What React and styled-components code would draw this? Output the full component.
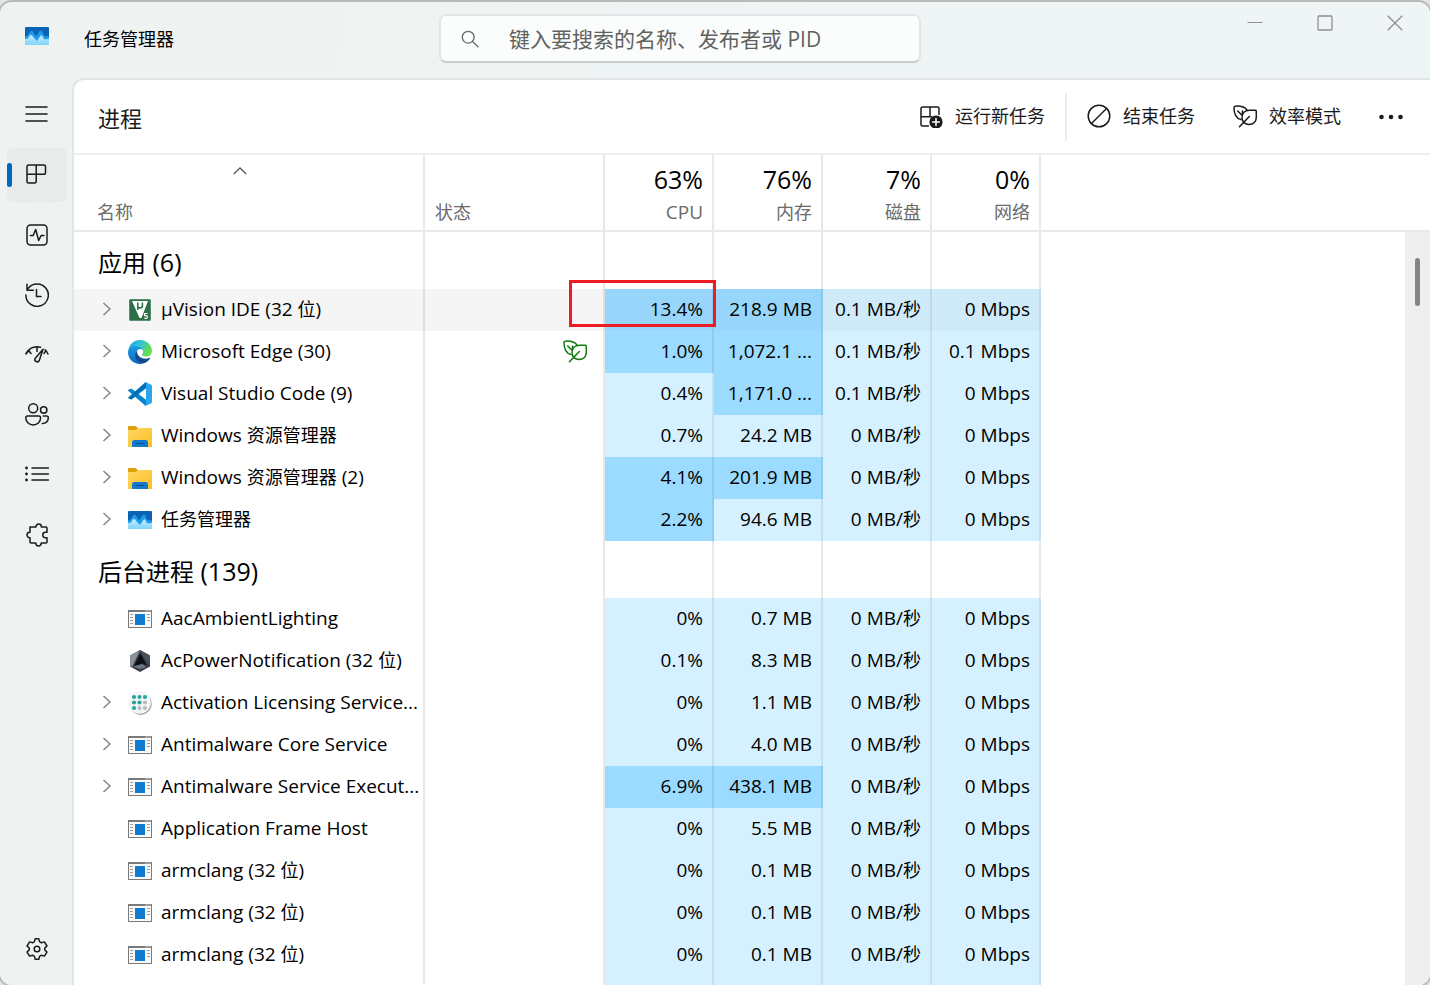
import React from 'react';
import styled, { createGlobalStyle, css } from 'styled-components';

const GlobalStyle = createGlobalStyle`
  *, *::before, *::after { box-sizing: border-box; }
  html, body { margin: 0; padding: 0; background: #e4e4e4; }
  body, button, input {
    font-family: "Open Sans", "Noto Sans CJK SC", sans-serif;
    font-size: 18px;
    line-height: 24px;
    color: #000;
  }
`;

const LINE = 'rgba(0, 0, 0, 0.09)';

/* ---------- layout ---------- */

const Window = styled.div`
  height: calc(100vh - 2px);
  margin-top: 2px;
  display: flex;
  flex-direction: column;
  overflow: hidden;
  border-radius: 12px;
  box-shadow: 0 0 0 2px #b8b9b9;
  background: linear-gradient(100deg, #eef3f1 0%, #eff4f5 60%);
`;

const TitleBar = styled.header`
  flex: none;
  height: 76px;
  display: grid;
  grid-template-columns: minmax(0, 439fr) minmax(0, 482fr) minmax(0, 509fr);
`;

const AppTitle = styled.div`
  display: flex;
  align-items: center;
  gap: 35px;
  padding: 0 0 2px 25px;
  svg { margin-bottom: 6px; }
`;

const TitleText = styled.h1`
  margin: 0;
  font-size: 18px;
  font-weight: 400;
`;

const SearchBox = styled.label`
  align-self: start;
  margin-top: 12px;
  height: 49px;
  display: flex;
  align-items: center;
  gap: 30px;
  padding: 0 20px;
  border: 2px solid #e2e6e6;
  border-bottom-color: #cbcecd;
  border-radius: 7px;
  background: #fbfdfc;
`;

const SearchInput = styled.input`
  flex: 1;
  min-width: 0;
  padding: 0;
  border: 0;
  outline: 0;
  background: transparent;
  font-size: 21px;
  line-height: 28px;
  &::placeholder { color: #5f6261; opacity: 1; }
`;

const WindowControls = styled.div`
  display: flex;
  justify-content: flex-end;
  align-items: flex-start;
`;

const ControlButton = styled.button`
  width: 70px;
  height: 42px;
  padding: 0;
  display: grid;
  place-items: center;
  border: 0;
  background: transparent;
`;

const Body = styled.div`
  flex: 1;
  min-height: 0;
  display: flex;
`;

const Sidebar = styled.nav`
  flex: none;
  width: 72px;
  padding: 10px 5px 9px 7px;
  display: flex;
  flex-direction: column;
  gap: 6px;
`;

const NavButton = styled.button`
  position: relative;
  width: 60px;
  height: 54px;
  padding: 0;
  display: grid;
  place-items: center;
  border: 0;
  border-radius: 6px;
  background: ${(p) => (p.$active ? '#e7ebea' : 'transparent')};
  ${(p) => p.$active && css`
    &::before {
      content: '';
      position: absolute;
      left: 0;
      top: 15px;
      width: 5px;
      height: 24px;
      border-radius: 3px;
      background: #0067c0;
    }
  `}
  ${(p) => p.$last && css`margin-top: auto;`}
`;

const Panel = styled.main`
  flex: 1;
  min-width: 0;
  display: flex;
  flex-direction: column;
  overflow: hidden;
  border-top: 2px solid #e2e5e5;
  border-left: 2px solid #e2e5e5;
  border-top-left-radius: 12px;
  background: #fff;
`;

const Toolbar = styled.div`
  flex: none;
  height: 75px;
  display: flex;
  align-items: center;
  gap: 2px;
  padding: 0 9px 0 24px;
  border-bottom: 2px solid #efefef;
`;

const PageTitle = styled.h2`
  margin: 2px auto 0 0;
  font-size: 22px;
  line-height: 28px;
  font-weight: 400;
  color: #1a1a1a;
`;

const ToolButton = styled.button`
  height: 48px;
  padding: 0 18px 2px;
  display: flex;
  align-items: center;
  gap: 12px;
  border: 0;
  background: transparent;
  color: #1a1a1a;
  white-space: nowrap;
`;

const Divider = styled.span`
  width: 2px;
  height: 48px;
  background: #ececec;
`;

const Content = styled.div`
  flex: 1;
  min-height: 0;
  display: flex;
  overflow: hidden;
`;

const Rail = styled.div`
  flex: none;
  width: 25px;
  background: #efefef;
`;

const RailHead = styled.div`
  height: 77px;
  border-bottom: 2px solid #e9e9e9;
  background: #fff;
`;

const Thumb = styled.div`
  width: 5px;
  height: 48px;
  margin: 26px 0 0 10px;
  border-radius: 3px;
  background: #858585;
`;

/* ---------- table ---------- */

const TableWrap = styled.div`
  flex: 1;
  min-width: 0;
`;

const Table = styled.table`
  width: 100%;
  table-layout: fixed;
  border-collapse: separate;
  border-spacing: 0;
  font-size: 19px;
`;

const Han = styled.span`
  font-size: ${(p) => p.$size || 18}px;
`;

const Col = styled.col`
  width: ${(p) => (p.$w ? `${p.$w}px` : 'auto')};
`;

const HeadCell = styled.th`
  height: 77px;
  padding: 6px ${(p) => (p.$num ? '9px' : '40px')} 6px ${(p) => p.$left || 0}px;
  border-right: ${(p) => (p.$open ? '0' : `2px solid ${LINE}`)};
  border-bottom: 2px solid #e9e9e9;
  vertical-align: bottom;
  text-align: ${(p) => (p.$num ? 'right' : 'left')};
  font-weight: 400;
  color: #6b6b6b;
`;

const Total = styled.div`
  font-size: 25px;
  line-height: 32px;
  padding-bottom: 5px;
  color: #000;
`;

const Caret = styled.div`
  display: flex;
  justify-content: center;
  height: 37px;
  padding-top: 4px;
`;

const GroupCell = styled.th`
  height: 57px;
  padding: 4px 0 0 24px;
  border-right: 2px solid ${LINE};
  text-align: left;
  font-size: 25px;
  line-height: 32px;
  font-weight: 400;
`;

const heat = {
  none: ['transparent', '#f5f5f5'],
  low: ['#d5f1ff', '#cfeaf9'],
  high: ['#9bdbff', '#97d6fa'],
};

const Cell = styled.td`
  position: relative;
  height: ${(p) => (p.$group ? '57px' : '42px')};
  padding: 0 9px 2px 0;
  border-right: ${(p) => (p.$open ? '0' : `2px solid ${p.$heat ? 'rgba(0, 0, 0, 0.07)' : LINE}`)};
  background-color: ${(p) => heat[p.$heat || 'none'][p.$hover ? 1 : 0]};
  text-align: right;
  white-space: nowrap;
`;

const NameCell = styled(Cell)`
  padding: 0 0 0 25px;
  text-align: left;
`;

const StatusCell = styled(Cell)`
  padding-right: 16px;
`;

const NameBox = styled.div`
  display: flex;
  align-items: center;
`;

const NameText = styled.span`
  padding-bottom: 2px;
  white-space: pre;
`;

const Expander = styled.button`
  width: 16px;
  height: 24px;
  margin-right: 13px;
  padding: 0 0 2px;
  display: grid;
  place-items: center;
  border: 0;
  background: transparent;
`;

const ExpanderSpace = styled.span`
  width: 29px;
`;

const IconSlot = styled.span`
  width: 24px;
  height: 26px;
  margin-right: 9px;
  display: grid;
  place-items: center;
`;

const StatusIcon = styled.span`
  display: flex;
  justify-content: flex-end;
`;

const Highlight = styled.span`
  position: absolute;
  z-index: 1;
  top: -9px;
  right: -4px;
  bottom: 4px;
  left: -36px;
  border: 3px solid #ed1c24;
`;

/* Latin and digits take the size of their parent; Chinese runs are set slightly smaller. */
const Mixed = ({ text, size }) =>
  text.split(/([\u4e00-\u9fff]+)/).map((part, i) => (i % 2 ? <Han key={i} $size={size}>{part}</Han> : part));

/* ---------- icons ---------- */

const Line = ({ size = 24, color = '#1b1b1b', width = 1.5, children }) => (
  <svg width={size} height={size} viewBox="0 0 24 24" fill="none" stroke={color}
    strokeWidth={width} strokeLinecap="round" strokeLinejoin="round" aria-hidden="true">
    {children}
  </svg>
);

const MenuIcon = () => <Line><path d="M1 4h21M1 11h21M1 18h21" /></Line>;
const ProcessIcon = () => (
  <Line>
    <path d="M3.5 2H19a1.500 1.500 0 0 1 1.500 1.500V9.800a1.500 1.500 0 0 1-1.500 1.500H11.200V18.500a1.500 1.500 0 0 1-1.500 1.500H3.500A1.500 1.500 0 0 1 2 18.500V3.500A1.500 1.500 0 0 1 3.500 2zM11.200 2v9.300H2" />
  </Line>
);
const PerformanceIcon = () => (
  <Line>
    <rect x="2" y="2" width="20" height="20" rx="3.500" />
    <path d="M5.300 12.500h2.900l2.500-6 3 11 2.400-5h2.900" />
  </Line>
);
const HistoryIcon = () => (
  <Line>
    <path d="M.9 12A11.200 11.200 0 1 0 3 5.600M2 1.200v6h6.300M11.500 6.500v7H16" />
  </Line>
);
const StartupIcon = () => (
  <Line>
    <path d="M1 10.500C3.500 6.200 7.500 3.800 12 3.800c1.200 0 2.400.1 3.500.5M12 4v4.500M3.500 7.500l2.500 3M1 11l3.200-4M19 10.500l2-3M20 6.800c1.300 1.100 2.300 2.300 3 4.200" />
    <path d="M18 6.200l-3.700 11.200a2.300 2.300 0 1 1-4.200-1.900z" />
  </Line>
);
const UsersIcon = () => (
  <Line>
    <circle cx="8.200" cy="5.300" r="4.500" />
    <circle cx="18.700" cy="7" r="3.200" />
    <path d="M2.500 12.900h11.300c1 0 1.800.8 1.800 1.800 0 4.500-3.500 7.200-7.400 7.200S.8 19.200.8 14.700c0-1 .8-1.800 1.700-1.800zM18.300 12.900h3.400c.9 0 1.600.7 1.600 1.600 0 3.800-2.700 5.900-6 6.100" />
  </Line>
);
const DetailsIcon = () => (
  <Line>
    <path d="M7 5h16.500M7 11h16.500M7 17h16.500" />
    <path d="M1.500 5h.01M1.500 11h.01M1.500 17h.01" strokeWidth="2.800" />
  </Line>
);
const ServicesIcon = () => (
  <Line>
    <path d="M5 4h6v-.2a2.700 2.700 0 0 1 5.400 0V4H21a1 1 0 0 1 1 1v4.300h-1.500a2.700 2.700 0 0 0 0 5.400H22V19a1 1 0 0 1-1 1h-4.800v.3a2.700 2.700 0 0 1-5.400 0V20H6a1 1 0 0 1-1-1v-4.300h-.3a2.700 2.700 0 0 1 0-5.400H5z" />
  </Line>
);
const SettingsIcon = () => (
  <Line>
    <circle cx="12" cy="12" r="2.800" />
    <path d="M10.200 1.700h3.600l.7 3 1.900 1.100 3-.9 2.600 4.100-2.300 2.100v1.800l2.300 2.100-2.600 4.100-3-.9-1.900 1.100-.7 3h-3.600l-.7-3-1.900-1.100-3 .9L2 15l2.300-2.100v-1.800L2 9l2.600-4.100 3 .9 1.900-1.100z" />
  </Line>
);
const RunIcon = () => (
  <Line>
    <path d="M9.500 22H3.500A1.500 1.500 0 0 1 2 20.500V4.500A1.500 1.500 0 0 1 3.500 3H18.500A1.500 1.500 0 0 1 20 4.500v6M11 3v9.800M2 12.800h10.500" />
    <circle cx="17" cy="18" r="6.600" fill="#1b1b1b" stroke="none" />
    <path d="M17 14.600v6.800M13.600 18h6.800" stroke="#fff" />
  </Line>
);
const EndIcon = () => (
  <Line><circle cx="12" cy="12" r="10.800" /><path d="M4.500 19.500l15-15" /></Line>
);
const LeafIcon = ({ color }) => (
  <Line color={color}>
    <path d="M8 15.500C3.500 14.500 1 11 1 3.500A1.300 1.300 0 0 1 2.300 2.200C7.500 1.800 11.500 2.800 14 6" />
    <path d="M4.700 7l4.300 4.300M9.500 7v3.700" />
    <path d="M22.200 6.200h-5.700c-4.500 0-7.500 3-7.500 7.300 0 4 3 7 7 7 4.500 0 7.300-3 7.300-7.500V7.300a1.100 1.100 0 0 0-1.100-1.100zM6.500 22.800l9.800-10.300" />
  </Line>
);
const MoreIcon = () => (
  <svg width="24" height="24" viewBox="0 0 24 24" fill="#1b1b1b" aria-hidden="true">
    <circle cx="2.500" cy="13" r="2.300" /><circle cx="12" cy="13" r="2.300" /><circle cx="21.500" cy="13" r="2.300" />
  </svg>
);
const SearchIcon = () => (
  <svg width="18" height="18" viewBox="0 0 18 18" fill="none" stroke="#666a69" strokeWidth="1.300" strokeLinecap="round" aria-hidden="true">
    <circle cx="7.200" cy="7.200" r="5.900" /><path d="M11.500 11.500l5.500 5.300" />
  </svg>
);
const ChevronRight = () => (
  <svg width="16" height="16" viewBox="0 0 16 16" fill="none" stroke="#858585" strokeWidth="1.500" aria-hidden="true">
    <path d="M4.500 2l6.500 6-6.500 6" />
  </svg>
);
const ChevronUp = () => (
  <svg width="14" height="8" viewBox="0 0 14 8" fill="none" stroke="#5c5c5c" strokeWidth="1.300" aria-hidden="true">
    <path d="M.8 7L7 1l6.200 6" />
  </svg>
);

const TaskManagerLogo = () => (
  <svg width="24" height="18" viewBox="0 0 24 18" aria-hidden="true">
    <defs>
      <linearGradient id="tmLow" x1="0" y1="0" x2="0" y2="1">
        <stop offset="0" stopColor="#c6ecff" /><stop offset="1" stopColor="#7fd3fb" />
      </linearGradient>
    </defs>
    <rect width="24" height="18" rx="1" fill="#0a63b5" />
    <path d="M0 9.500L2 9l3.500-5 1.800-.5L10 8l1.500 1L14.500 4l2-.5L19.500 9l4.500.5V18H0z" fill="#1e9be6" />
    <path d="M0 12l3-.5L5 8l2 .3L9 11l3 3 2.500-4 2-2 3 4.500 4.500-.8V18H0z" fill="url(#tmLow)" />
  </svg>
);

const UVisionLogo = () => (
  <svg width="24" height="24" viewBox="0 0 24 24" aria-hidden="true">
    <rect x="1" y="1" width="22" height="22" rx="2" fill="#2b6f45" />
    <rect x="1.500" y="1.500" width="21" height="21" rx="2" fill="none" stroke="#5c8f72" />
    <path d="M4 3H20L13.500 20h-2z" fill="#fff" />
    <path d="M9.800 4.500V12M9.800 4.500v3.300a2.300 2.200 0 0 0 4.600 0V4.500v5" stroke="#2b6f45" strokeWidth="1.500" fill="none" />
    <path d="M19.500 15.500h-3v2.200h1.600a1.200 1.200 0 0 1 0 2.600h-1.800" stroke="#fff" strokeWidth="1.200" fill="none" />
  </svg>
);

const EdgeLogo = () => (
  <svg width="24" height="24" viewBox="0 0 24 24" aria-hidden="true">
    <defs>
      <linearGradient id="edTop" x1="0" y1="0" x2="1" y2=".4">
        <stop offset="0" stopColor="#1b9de2" /><stop offset=".5" stopColor="#2fc3d8" /><stop offset="1" stopColor="#66e04b" />
      </linearGradient>
      <linearGradient id="edMid" x1="0" y1="0" x2="0" y2="1">
        <stop offset="0" stopColor="#1a9de5" /><stop offset="1" stopColor="#0a68c0" />
      </linearGradient>
    </defs>
    <path d="M.3 10.500C1 4.500 5.800 0 12 0c7 0 12 5.200 12 10.800 0 3.500-2.600 5.800-5.800 5.800-2.600 0-4.200-.9-4.200-2 0-.8 1.200-1.300 1.200-3.200C15.200 8.500 12 5.800 8 5.800c-3.400 0-6.400 1.800-7.700 4.700z" fill="url(#edTop)" />
    <path d="M0 12.500C0 8.500 3.500 5.800 7.800 5.800c4.500 0 7.400 2.700 7.400 5.500 0-1.500-1.500-2.600-3.500-2.300C9 9.500 7.600 12 7.800 14.800 8 19 11 22.500 15 23.600c-1 .3-2 .4-3 .4C5.300 24 0 18.900 0 12.500z" fill="url(#edMid)" />
    <path d="M9.500 10.200C7.800 11.400 7 13.500 7.200 15.500c.4 4.500 4 7.700 8 8.100 3-.8 5.500-2.700 7-5.300.2-.5-.2-.8-.7-.5-1.200.6-2.500.9-3.800.9-4.900 0-8.700-3.300-8.700-7 0-.6.2-1.100.5-1.500z" fill="#114a8b" />
  </svg>
);

const CodeLogo = () => (
  <svg width="24" height="24" viewBox="0 0 24 24" aria-hidden="true">
    <path d="M1.600 7.300l1.300-.6c.4-.1.8 0 1.100.2L18 17.700V23.700c-.7 0-1.100-.2-1.500-.6L.4 8.900c-.4-.4-.4-1 0-1.400z" fill="#0b84cc" />
    <path d="M1.600 16.800l1.300.6c.4.1.8 0 1.100-.2L18 6.300V.3c-.7 0-1.100.2-1.500.6L.4 15.200c-.4.4-.4 1 0 1.400z" fill="#0070b8" />
    <path d="M16.400 23.500c.6.500 1.300.4 2 .1l4.600-2.200c.6-.3 1-.9 1-1.600V4.200c0-.7-.4-1.300-1-1.600L18.400.4c-.7-.3-1.400-.3-2 .2.700-.4 1.600.1 1.600 1V22.500c0 .9-.9 1.400-1.600 1z" fill="#29a8f1" />
  </svg>
);

const FolderLogo = () => (
  <svg width="24" height="22" viewBox="0 0 24 22" aria-hidden="true">
    <defs>
      <linearGradient id="fdBody" x1="0" y1="0" x2="1" y2="1">
        <stop offset="0" stopColor="#ffd765" /><stop offset="1" stopColor="#fbbf24" />
      </linearGradient>
    </defs>
    <path d="M0 2A1 1 0 0 1 1 1h6.500L10 3v3H0z" fill="#dd9f0c" />
    <path d="M0 5h7.500L10 3H23a1 1 0 0 1 1 1V22H0z" fill="url(#fdBody)" />
    <path d="M4 22v-4.500A2.500 2.500 0 0 1 6.500 15h11a2.500 2.500 0 0 1 2.500 2.500V22z" fill="#1379cc" />
    <path d="M7.500 18.500h9" stroke="#0a4f91" strokeWidth="1" />
  </svg>
);

const ExeLogo = () => (
  <svg width="24" height="18" viewBox="0 0 24 18" aria-hidden="true">
    <rect x=".5" y=".5" width="23" height="17" fill="#fafafa" stroke="#7a7a7a" />
    <rect width="24" height="2" fill="#7a7a7a" />
    <path d="M17.500 1h1M19.500 1h1M21.500 1h1" stroke="#fff" strokeWidth="1" />
    <path d="M2 4.500h3M2 7.500h3M2 10.500h3M2 13.500h3M19 4.500h3M19 7.500h3M19 10.500h3" stroke="#9a9a9a" />
    <rect x="7" y="4" width="10" height="11" fill="#0f7bd0" />
  </svg>
);

const HexLogo = () => (
  <svg width="24" height="24" viewBox="0 0 24 24" aria-hidden="true">
    <path d="M12 1l10 5.500v11L12 23 2 17.500v-11z" fill="#3a3f47" />
    <path d="M12 1.500L4 18 2 17V6.500z" fill="#8a929d" />
    <path d="M12 1l10 5.500v10L13 4.500z" fill="#4b525c" />
    <path d="M12.500 4.500l6.500 12-4.500-2-8.500 2.500z" fill="#0d0f13" />
    <path d="M5 17.500l9.500-2.500 3.500 3.500L12 20z" fill="#6d7580" />
  </svg>
);

const GridLogo = () => (
  <svg width="24" height="24" viewBox="0 0 24 24" aria-hidden="true">
    <circle cx="12.500" cy="12.700" r="11.200" fill="#9da4ab" />
    <circle cx="11.500" cy="11.500" r="11.300" fill="#f4f5f6" />
    {[6, 11.5, 17].map((y, r) => [6, 11.5, 17].map((x, c) => (
      <circle key={`${x}-${y}`} cx={x} cy={y} r="2.100" fill={r + c < 3 && !(r === 1 && c === 2) && !(r === 2 && c === 1) ? '#2aa6a0' : '#b9bcc0'} />
    )))}
  </svg>
);

/* ---------- data ---------- */

const NAV = [
  ['菜单', MenuIcon], ['进程', ProcessIcon], ['性能', PerformanceIcon], ['应用历史记录', HistoryIcon],
  ['启动应用', StartupIcon], ['用户', UsersIcon], ['详细信息', DetailsIcon], ['服务', ServicesIcon],
];

const METRICS = [['63%', 'CPU'], ['76%', '内存'], ['7%', '磁盘'], ['0%', '网络']];

const GROUPS = [
  {
    title: '应用 (6)',
    rows: [
      { name: 'µVision IDE (32 位)', icon: UVisionLogo, open: true, hover: true, marked: true, values: ['13.4%', '218.9 MB', '0.1 MB/秒', '0 Mbps'], hot: [0, 1] },
      { name: 'Microsoft Edge (30)', icon: EdgeLogo, open: true, eco: true, values: ['1.0%', '1,072.1 ...', '0.1 MB/秒', '0.1 Mbps'], hot: [0, 1] },
      { name: 'Visual Studio Code (9)', icon: CodeLogo, open: true, values: ['0.4%', '1,171.0 ...', '0.1 MB/秒', '0 Mbps'], hot: [1] },
      { name: 'Windows 资源管理器', icon: FolderLogo, open: true, values: ['0.7%', '24.2 MB', '0 MB/秒', '0 Mbps'] },
      { name: 'Windows 资源管理器 (2)', icon: FolderLogo, open: true, values: ['4.1%', '201.9 MB', '0 MB/秒', '0 Mbps'], hot: [0, 1] },
      { name: '任务管理器', icon: TaskManagerLogo, open: true, values: ['2.2%', '94.6 MB', '0 MB/秒', '0 Mbps'], hot: [0] },
    ],
  },
  {
    title: '后台进程 (139)',
    rows: [
      { name: 'AacAmbientLighting', icon: ExeLogo, values: ['0%', '0.7 MB', '0 MB/秒', '0 Mbps'] },
      { name: 'AcPowerNotification (32 位)', icon: HexLogo, values: ['0.1%', '8.3 MB', '0 MB/秒', '0 Mbps'] },
      { name: 'Activation Licensing Service...', icon: GridLogo, open: true, values: ['0%', '1.1 MB', '0 MB/秒', '0 Mbps'] },
      { name: 'Antimalware Core Service', icon: ExeLogo, open: true, values: ['0%', '4.0 MB', '0 MB/秒', '0 Mbps'] },
      { name: 'Antimalware Service Execut...', icon: ExeLogo, open: true, values: ['6.9%', '438.1 MB', '0 MB/秒', '0 Mbps'], hot: [0, 1] },
      { name: 'Application Frame Host', icon: ExeLogo, values: ['0%', '5.5 MB', '0 MB/秒', '0 Mbps'] },
      { name: 'armclang (32 位)', icon: ExeLogo, values: ['0%', '0.1 MB', '0 MB/秒', '0 Mbps'] },
      { name: 'armclang (32 位)', icon: ExeLogo, values: ['0%', '0.1 MB', '0 MB/秒', '0 Mbps'] },
      { name: 'armclang (32 位)', icon: ExeLogo, values: ['0%', '0.1 MB', '0 MB/秒', '0 Mbps'] },
      { name: '', values: ['', '', '', ''] },
    ],
  },
];

const ProcessRow = ({ row }) => {
  const Icon = row.icon;
  return (
    <tr>
      <NameCell $hover={row.hover}>
        <NameBox>
          {row.open ? <Expander aria-label="展开"><ChevronRight /></Expander> : <ExpanderSpace />}
          {Icon && <IconSlot><Icon /></IconSlot>}
          <NameText><Mixed text={row.name} /></NameText>
        </NameBox>
      </NameCell>
      <StatusCell $hover={row.hover}>
        {row.eco && <StatusIcon><LeafIcon color="#0f7b0f" /></StatusIcon>}
      </StatusCell>
      {row.values.map((v, i) => (
        <Cell key={i} $hover={row.hover} $heat={row.hot && row.hot.includes(i) ? 'high' : 'low'}>
          <Mixed text={v} />
          {row.marked && i === 0 && <Highlight />}
        </Cell>
      ))}
      <Cell $open />
    </tr>
  );
};

export default function App() {
  return (
    <>
      <GlobalStyle />
      <Window>
        <TitleBar>
          <AppTitle>
            <TaskManagerLogo />
            <TitleText>任务管理器</TitleText>
          </AppTitle>
          <SearchBox>
            <SearchIcon />
            <SearchInput type="text" aria-label="搜索" placeholder="键入要搜索的名称、发布者或 PID" />
          </SearchBox>
          <WindowControls>
            <ControlButton aria-label="最小化">
              <svg width="16" height="16" viewBox="0 0 16 16" stroke="#8b8f8f"><path d="M.5 7.500h15" /></svg>
            </ControlButton>
            <ControlButton aria-label="最大化">
              <svg width="16" height="16" viewBox="0 0 16 16" stroke="#8b8f8f" fill="none" strokeWidth="1.300"><rect x="1" y="1" width="14" height="14" rx="1" /></svg>
            </ControlButton>
            <ControlButton aria-label="关闭">
              <svg width="16" height="16" viewBox="0 0 16 16" stroke="#8b8f8f" strokeWidth="1.300"><path d="M.7.7l14.600 14.600M15.300.7L.7 15.300" /></svg>
            </ControlButton>
          </WindowControls>
        </TitleBar>
        <Body>
          <Sidebar>
            {NAV.map(([label, Icon]) => (
              <NavButton key={label} aria-label={label} $active={Icon === ProcessIcon}><Icon /></NavButton>
            ))}
            <NavButton aria-label="设置" $last><SettingsIcon /></NavButton>
          </Sidebar>
          <Panel>
            <Toolbar>
              <PageTitle>进程</PageTitle>
              <ToolButton><RunIcon />运行新任务</ToolButton>
              <Divider />
              <ToolButton><EndIcon />结束任务</ToolButton>
              <ToolButton><LeafIcon />效率模式</ToolButton>
              <ToolButton aria-label="更多"><MoreIcon /></ToolButton>
            </Toolbar>
            <Content>
              <TableWrap>
                <Table>
                  <colgroup>
                    <Col $w={351} /><Col $w={180} /><Col $w={109} /><Col $w={109} /><Col $w={109} /><Col $w={109} /><Col />
                  </colgroup>
                  <thead>
                    <tr>
                      <HeadCell $left={23}><Caret><ChevronUp /></Caret><Mixed text="名称" /></HeadCell>
                      <HeadCell $left={10}><Mixed text="状态" /></HeadCell>
                      {METRICS.map(([total, label]) => (
                        <HeadCell key={label} $num><Total>{total}</Total><Mixed text={label} /></HeadCell>
                      ))}
                      <HeadCell $open />
                    </tr>
                  </thead>
                  {GROUPS.map((g) => (
                    <tbody key={g.title}>
                      <tr>
                        <GroupCell scope="rowgroup"><Mixed text={g.title} size={24} /></GroupCell>
                        <Cell $group /><Cell $group /><Cell $group /><Cell $group /><Cell $group /><Cell $group $open />
                      </tr>
                      {g.rows.map((row, i) => <ProcessRow key={i} row={row} />)}
                    </tbody>
                  ))}
                </Table>
              </TableWrap>
              <Rail>
                <RailHead />
                <Thumb />
              </Rail>
            </Content>
          </Panel>
        </Body>
      </Window>
    </>
  );
}
